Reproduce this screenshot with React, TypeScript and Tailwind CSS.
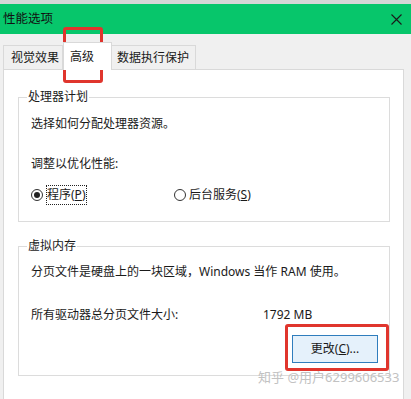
// Windows "性能选项" dialog, 高级 tab, with two red annotation boxes and a watermark.

function Radio({ checked }: { checked?: boolean }) {
  return (
    <span className="w-[12px] h-[12px] rounded-full border border-[#333] bg-white flex items-center justify-center shrink-0">
      {checked && <span className="w-[6px] h-[6px] rounded-full bg-[#222]" />}
    </span>
  );
}

export default function App() {
  return (
    <div className="relative w-[411px] h-[399px] overflow-hidden bg-[#f0f0f0] text-[12px] leading-[16px] text-[#1a1a1a] font-['Noto_Sans','Noto_Sans_CJK_SC',sans-serif]">
      <div className="h-[4px] bg-[#d6d6d6]" />

      {/* Title bar */}
      <div className="h-[30px] bg-[#07c66b] flex items-center justify-between pl-[3px] pr-[8px]">
        <span className="text-[12.5px] text-[#111]">性能选项</span>
        <svg width="11" height="11" viewBox="0 0 11 11" className="mr-[1px]">
          <path d="M0.5 0.5 L10.5 10.5 M10.5 0.5 L0.5 10.5" stroke="#1a1a1a" strokeWidth="1.1" />
        </svg>
      </div>

      <div className="pl-[3px] pr-[7px] pt-[7px]">
        {/* Tabs */}
        <div className="flex items-end h-[28px] relative z-10">
          <div className="w-[60px] h-[24px] pl-[7px] pt-[4px] border border-b-0 border-[#d9d9d9] bg-[#f0f0f0]">
            视觉效果
          </div>
          <div className="w-[49px] h-[28px] pl-[6px] pt-[6px] border border-b-0 border-[#d9d9d9] bg-white -mb-px">
            高级
          </div>
          <div className="w-[84px] h-[24px] pl-[5px] pt-[4px] border border-b-0 border-l-0 border-[#d9d9d9] bg-[#f0f0f0]">
            数据执行保护
          </div>
        </div>

        {/* Panel */}
        <div className="bg-white border border-[#d9d9d9] h-[340px] pl-[14px] pr-[13px] pt-[19px]">
          <fieldset className="border border-[#dcdcdc] pl-[12px] pb-[18px]">
            <legend className="-ml-[4px] px-[1px]">处理器计划</legend>
            <p className="mt-[11px]">选择如何分配处理器资源。</p>
            <p className="mt-[24px]">调整以优化性能:</p>
            <div className="mt-[15px] flex items-center h-[16px]">
              <Radio checked />
              <span className="ml-[3px] w-[41px] h-[20px] border border-dotted border-[#222] flex items-center">
                程序(<span className="underline">P</span>)
              </span>
              <span className="ml-[87px]">
                <Radio />
              </span>
              <span className="ml-[3px]">
                后台服务(<span className="underline">S</span>)
              </span>
            </div>
          </fieldset>

          <fieldset className="mt-[16px] border border-[#dcdcdc] pl-[12px] pr-[11px] pb-[12px]">
            <legend className="-ml-[4px] px-[1px]">虚拟内存</legend>
            <p className="mt-[10px]">分页文件是硬盘上的一块区域，Windows 当作 RAM 使用。</p>
            <div className="mt-[27px] flex">
              <span className="w-[232px]">所有驱动器总分页文件大小:</span>
              <span>1792 MB</span>
            </div>
            <div className="mt-[12px] flex justify-end">
              <button className="w-[86px] h-[28px] bg-[#e5f1fb] border border-[#2f7dbd] text-[12px]">
                更改(<span className="underline">C</span>)...
              </button>
            </div>
          </fieldset>
        </div>
      </div>

      {/* Annotations */}
      <div className="absolute left-[63px] top-[27px] w-[40px] h-[56px] border-[3px] border-[#e0352d] rounded-[3px]" />
      <div className="absolute left-[285px] top-[324px] w-[104px] h-[47px] border-[3px] border-[#e0352d] rounded-[3px]" />
      <div className="absolute left-[258px] top-[369px] text-[13px] leading-[16px] text-[#c2c2c2]">
        知乎 @用户6299606533
      </div>
    </div>
  );
}
